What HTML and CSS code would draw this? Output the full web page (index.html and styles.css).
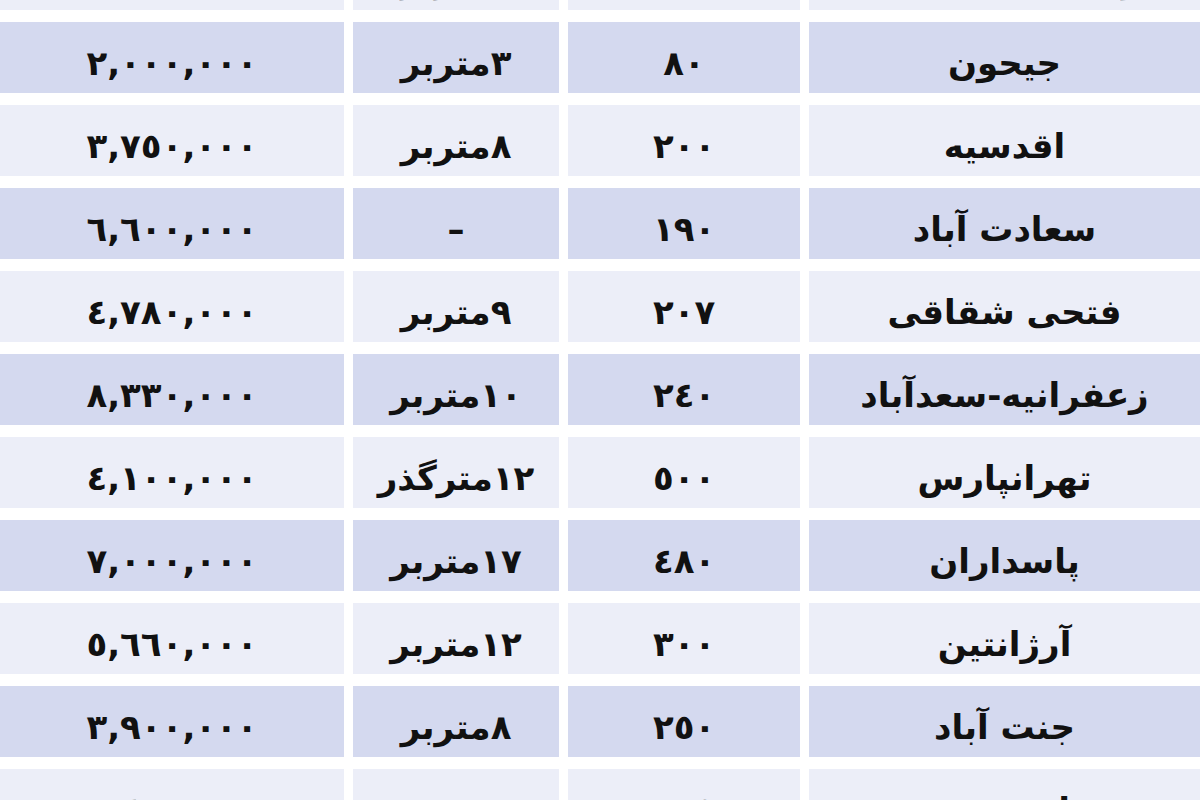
FILE: index.html
```html
<!DOCTYPE html>
<html lang="fa" dir="rtl">
<head>
<meta charset="utf-8">
<title>قیمت زمین</title>
<link rel="stylesheet" href="styles.css">
</head>
<body>
<div class="table">
  <div class="row light"><div class="cell">یوسف آباد شمالی</div><div class="cell">٢٢٠</div><div class="cell">٦متربر</div><div class="cell price">٥,٢٠٠,٠٠٠</div></div>
  <div class="row blue"><div class="cell">جیحون</div><div class="cell">٨٠</div><div class="cell">٣متربر</div><div class="cell price">٢,٠٠٠,٠٠٠</div></div>
  <div class="row light"><div class="cell">اقدسیه</div><div class="cell">٢٠٠</div><div class="cell">٨متربر</div><div class="cell price">٣,٧٥٠,٠٠٠</div></div>
  <div class="row blue"><div class="cell">سعادت آباد</div><div class="cell">١٩٠</div><div class="cell">–</div><div class="cell price">٦,٦٠٠,٠٠٠</div></div>
  <div class="row light"><div class="cell">فتحی شقاقی</div><div class="cell">٢٠٧</div><div class="cell">٩متربر</div><div class="cell price">٤,٧٨٠,٠٠٠</div></div>
  <div class="row blue"><div class="cell">زعفرانیه-سعدآباد</div><div class="cell">٢٤٠</div><div class="cell">١٠متربر</div><div class="cell price">٨,٣٣٠,٠٠٠</div></div>
  <div class="row light"><div class="cell">تهرانپارس</div><div class="cell">٥٠٠</div><div class="cell">١٢مترگذر</div><div class="cell price">٤,١٠٠,٠٠٠</div></div>
  <div class="row blue"><div class="cell">پاسداران</div><div class="cell">٤٨٠</div><div class="cell">١٧متربر</div><div class="cell price">٧,٠٠٠,٠٠٠</div></div>
  <div class="row light"><div class="cell">آرژانتین</div><div class="cell">٣٠٠</div><div class="cell">١٢متربر</div><div class="cell price">٥,٦٦٠,٠٠٠</div></div>
  <div class="row blue"><div class="cell">جنت آباد</div><div class="cell">٢٥٠</div><div class="cell">٨متربر</div><div class="cell price">٣,٩٠٠,٠٠٠</div></div>
  <div class="row light"><div class="cell">قیطریه جنوبی</div><div class="cell">٢٣٥</div><div class="cell">١٠متربر</div><div class="cell price">٣,٤٠٠,٠٠٠</div></div>
</div>
</body>
</html>
```
FILE: styles.css
```css
html, body {
  margin: 0;
  padding: 0;
  background: #ffffff;
  overflow: hidden;
  height: 800px;
}

.table {
  display: flex;
  flex-direction: column;
  gap: 12px;
  margin-top: -61px;
  direction: rtl;
  font-family: "DejaVu Sans", sans-serif;
  font-weight: bold;
  font-size: 34px;
  color: #111111;
}

.row {
  display: grid;
  grid-template-columns: 391px 232px 206px 344px;
  column-gap: 9px;
  height: 71px;
}

.cell {
  display: flex;
  align-items: center;
  justify-content: center;
  padding-top: 10px;
  box-sizing: border-box;
  white-space: nowrap;
}

.cell.price {
  letter-spacing: 4px;
}

.row.blue .cell {
  background: #d4d9ef;
}

.row.light .cell {
  background: #eceef8;
}
```
